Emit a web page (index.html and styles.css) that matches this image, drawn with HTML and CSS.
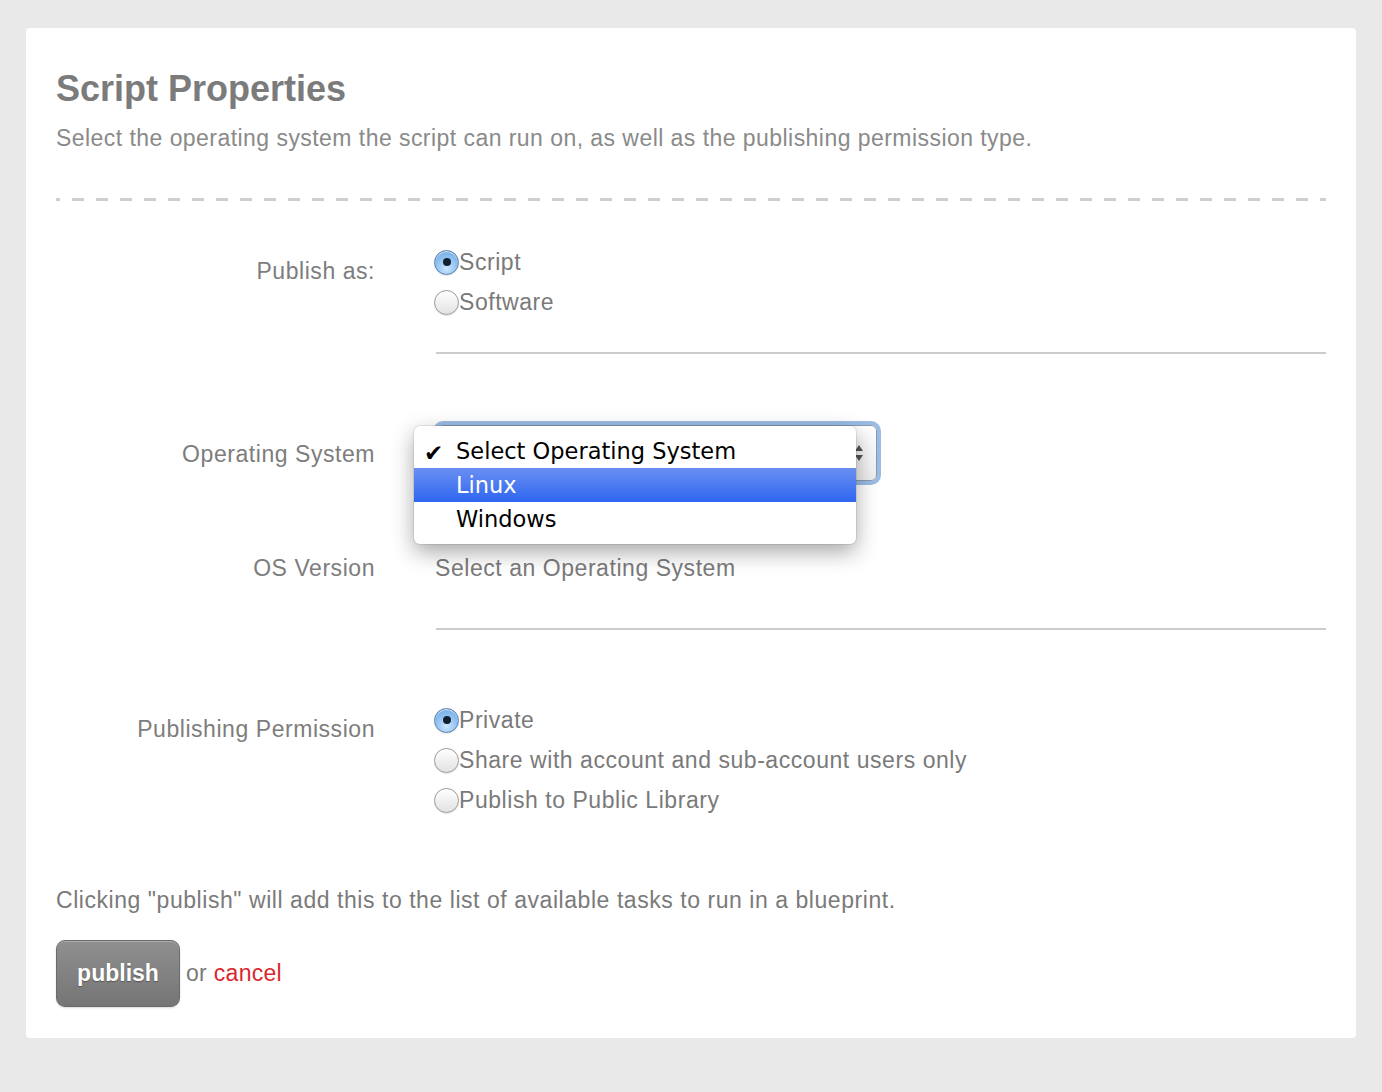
FILE: index.html
```html
<!DOCTYPE html>
<html>
<head>
<meta charset="utf-8">
<link rel="stylesheet" href="styles.css">
</head>
<body>
<div class="card">
  <h1 class="title">Script Properties</h1>
  <p class="subtitle">Select the operating system the script can run on, as well as the publishing permission type.</p>
  <div class="dashed"></div>

  <div class="row row-publish">
    <div class="label label-radio">Publish as:</div>
    <div class="field">
      <label class="radio"><span class="dot checked"></span>Script</label>
      <label class="radio"><span class="dot"></span>Software</label>
    </div>
  </div>
  <div class="rule"></div>

  <div class="row row-os">
    <div class="label">Operating System</div>
    <div class="field">
      <div class="select">
        <span class="arrows">
          <svg width="10" height="20" viewBox="0 0 10 20"><path d="M1 8 L5 2 L9 8 Z" fill="#555"/><path d="M1 12 L5 18 L9 12 Z" fill="#555"/></svg>
        </span>
        <div class="menu">
          <div class="item"><span class="check">&#10004;</span>Select Operating System</div>
          <div class="item active">Linux</div>
          <div class="item">Windows</div>
        </div>
      </div>
    </div>
  </div>

  <div class="row row-version">
    <div class="label">OS Version</div>
    <div class="field text">Select an Operating System</div>
  </div>
  <div class="rule"></div>

  <div class="row row-perm">
    <div class="label label-radio">Publishing Permission</div>
    <div class="field">
      <label class="radio"><span class="dot checked"></span>Private</label>
      <label class="radio"><span class="dot"></span>Share with account and sub-account users only</label>
      <label class="radio"><span class="dot"></span>Publish to Public Library</label>
    </div>
  </div>

  <p class="note">Clicking "publish" will add this to the list of available tasks to run in a blueprint.</p>
  <div class="actions">
    <button class="btn">publish</button>
    <span class="or">or <a class="cancel" href="#">cancel</a></span>
  </div>
</div>
</body>
</html>
```

FILE: styles.css
```css
html, body {
  margin: 0;
  padding: 0;
  background: #e9e9e9;
}
body {
  font-family: "Liberation Sans", Arial, sans-serif;
  color: #808080;
  padding: 28px 26px 54px 26px;
}
.card {
  background: #fff;
  border-radius: 4px;
  padding: 41px 30px 31px 30px;
}
.title {
  margin: 0;
  font-size: 36px;
  line-height: 40px;
  font-weight: bold;
  color: #7b7b7b;
}
.subtitle {
  margin: 16px 0 0 0;
  font-size: 23px;
  line-height: 26px;
  letter-spacing: 0.45px;
  color: #8a8a8a;
}
.dashed {
  margin-top: 47px;
  height: 3px;
  background: repeating-linear-gradient(to right, #cfcfcf 0 4px, transparent 4px 16px, #cfcfcf 16px 24px);
}
.row {
  display: flex;
  align-items: flex-start;
}
.label {
  width: 319px;
  flex: none;
  text-align: right;
  font-size: 23px;
  line-height: 26px;
  letter-spacing: 0.55px;
  color: #7d7d7d;
}
.field {
  margin-left: 60px;
  flex: 1;
}
.label-radio {
  padding-top: 16px;
}
.row-publish {
  margin-top: 41px;
}
.radio {
  display: flex;
  align-items: center;
  height: 40px;
  font-size: 23px;
  letter-spacing: 0.55px;
  color: #7a7a7a;
}
.dot {
  width: 23px;
  height: 23px;
  border-radius: 50%;
  border: 1px solid #9a9a9a;
  background: linear-gradient(#ffffff, #e2e2e2);
  box-shadow: inset 0 1px 1px rgba(255,255,255,.8), 0 1px 1px rgba(0,0,0,.1);
  margin-left: -1px;
  position: relative;
  flex: none;
}
.dot.checked {
  border-color: #5a7fae;
  background: radial-gradient(circle at 50% 75%, #cde7ff 0, #8bbef0 55%, #6fa3de 100%);
}
.dot.checked::after {
  content: "";
  position: absolute;
  left: 7.5px;
  top: 7.5px;
  width: 8px;
  height: 8px;
  border-radius: 50%;
  background: #10202e;
}
.rule {
  margin-left: 380px;
  height: 2px;
  background: #cccccc;
}
.row-publish + .rule {
  margin-top: 30px;
}
.row-os {
  margin-top: 67px;
  align-items: center;
}
.row-os .label {
  margin-top: 2px;
}
.field .select {
  margin-left: 2px;
}
.select {
  position: relative;
  width: 438px;
  height: 54px;
  border: 1px solid #8a9bb0;
  border-radius: 6px;
  box-shadow: 0 0 0 4px rgba(120, 165, 220, 0.75);
  background: linear-gradient(#ffffff, #eeeeee);
  margin: 4px 0;
}
.arrows {
  position: absolute;
  right: 12px;
  top: 17px;
  display: block;
  width: 10px;
  height: 20px;
}
.arrows svg { display: block; }
.menu {
  position: absolute;
  left: -24px;
  top: 0px;
  width: 442px;
  padding: 8px 0;
  background: #fff;
  border-radius: 6px;
  box-shadow: 0 8px 22px rgba(0,0,0,.35), 0 0 0 1px rgba(0,0,0,.08);
  font-family: "DejaVu Sans", "Liberation Sans", sans-serif;
  font-size: 22.5px;
  color: #000;
  z-index: 2;
}
.item {
  position: relative;
  height: 34px;
  line-height: 34px;
  padding-left: 42px;
}
.item.active {
  color: #fff;
  background: linear-gradient(#6a8ff2, #2e66f0);
}
.check {
  position: absolute;
  left: 10px;
  top: 2px;
  font-size: 23px;
}
.row-version {
  margin-top: 70px;
}
.field.text {
  font-size: 23px;
  line-height: 26px;
  letter-spacing: 0.55px;
  color: #7a7a7a;
}
.row-version + .rule {
  margin-top: 47px;
}
.row-perm {
  margin-top: 70px;
}
.note {
  margin: 67px 0 0 0;
  font-size: 23px;
  line-height: 26px;
  letter-spacing: 0.55px;
  color: #7a7a7a;
}
.actions {
  margin-top: 27px;
  display: flex;
  align-items: center;
}
.btn {
  width: 124px;
  height: 67px;
  border: 1px solid #6b6b6b;
  border-radius: 9px;
  background: linear-gradient(#8f8f8f, #757575);
  color: #fff;
  font-family: "Liberation Sans", Arial, sans-serif;
  font-weight: bold;
  font-size: 23px;
  text-shadow: 0 1px 1px rgba(0,0,0,.35);
  box-shadow: inset 0 1px 0 rgba(255,255,255,.25), 0 1px 2px rgba(0,0,0,.15);
  padding: 0;
}
.or {
  margin-left: 6px;
  font-size: 23px;
  letter-spacing: 0.3px;
  color: #7a7a7a;
}
.cancel {
  color: #d9272e;
  text-decoration: none;
}
```
